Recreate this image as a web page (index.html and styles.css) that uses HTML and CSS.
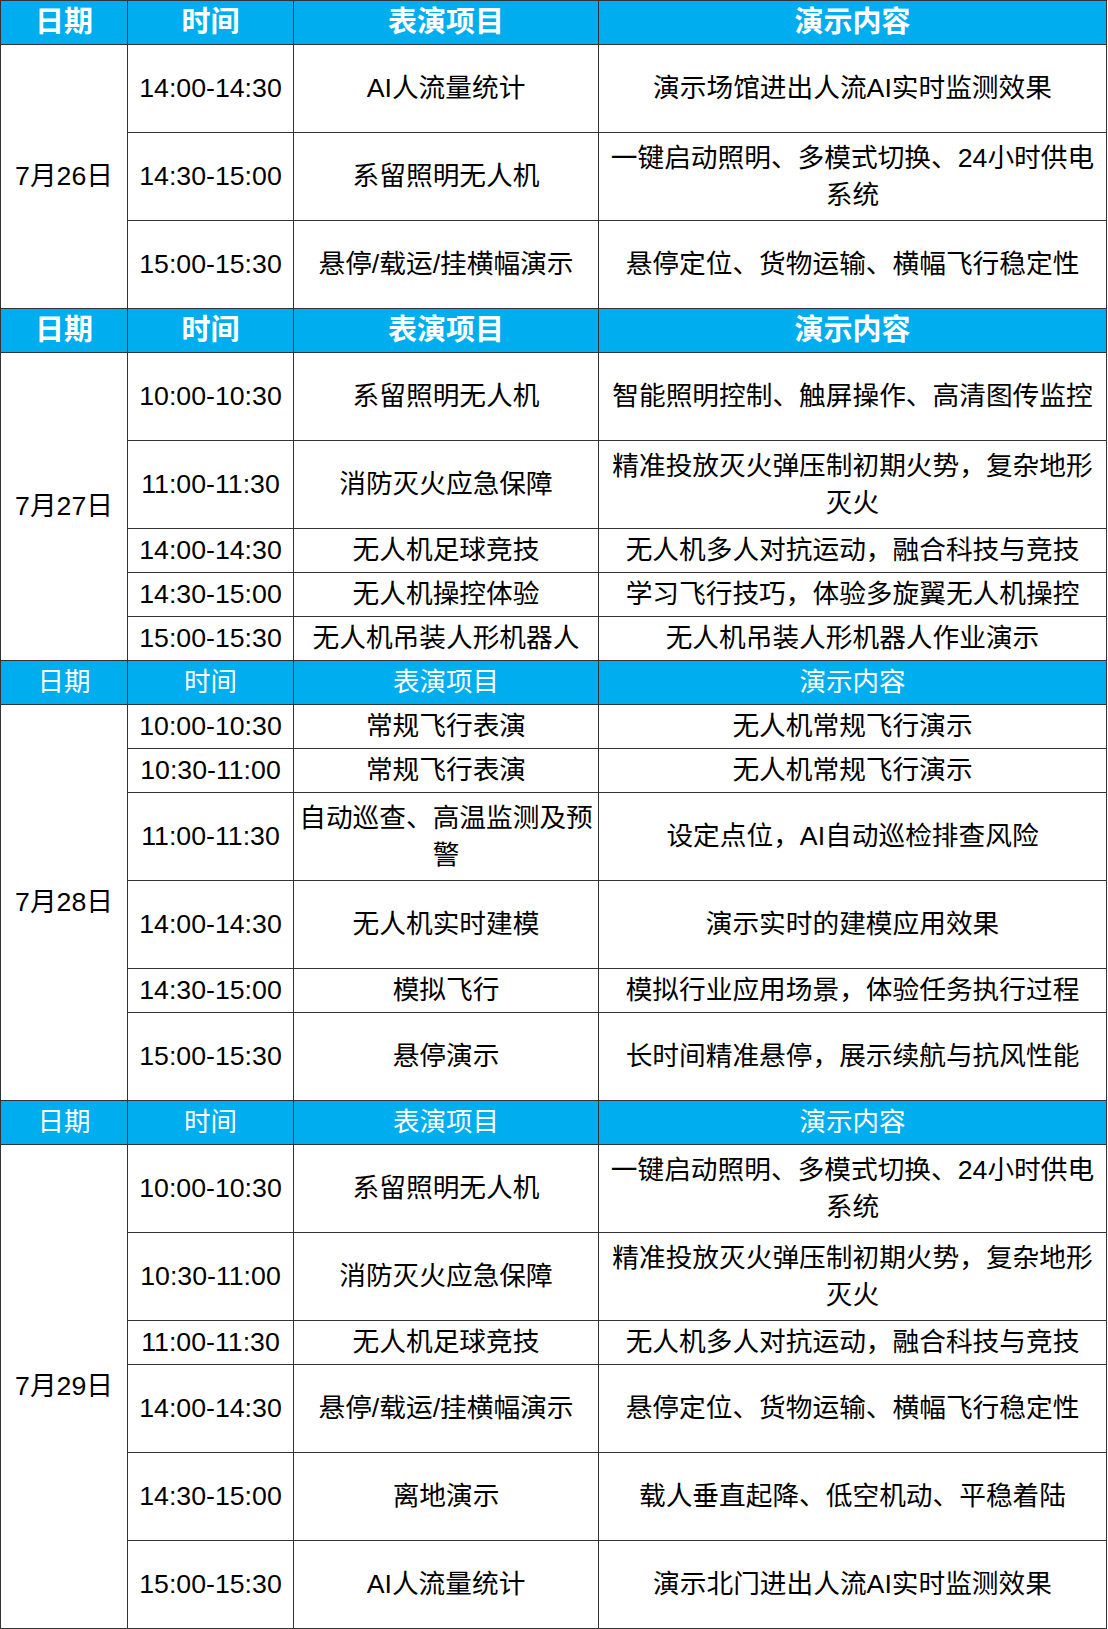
FILE: index.html
```html
<!DOCTYPE html>
<html lang="zh-CN">
<head>
<meta charset="utf-8">
<title>演示日程</title>
<link rel="stylesheet" href="styles.css">
</head>
<body>
<div class="schedule">
  <!-- 7月26日 -->
  <div class="hd c1 bold">日期</div><div class="hd c2 bold">时间</div><div class="hd c3 bold">表演项目</div><div class="hd c4 bold">演示内容</div>
  <div class="cell c1 span6">7月26日</div>
  <div class="cell c2 tall">14:00-14:30</div><div class="cell c3 tall">AI人流量统计</div><div class="cell c4 tall">演示场馆进出人流AI实时监测效果</div>
  <div class="cell c2 tall">14:30-15:00</div><div class="cell c3 tall">系留照明无人机</div><div class="cell c4 tall">一键启动照明、多模式切换、24小时供电系统</div>
  <div class="cell c2 tall">15:00-15:30</div><div class="cell c3 tall">悬停/载运/挂横幅演示</div><div class="cell c4 tall">悬停定位、货物运输、横幅飞行稳定性</div>

  <!-- 7月27日 -->
  <div class="hd c1 bold">日期</div><div class="hd c2 bold">时间</div><div class="hd c3 bold">表演项目</div><div class="hd c4 bold">演示内容</div>
  <div class="cell c1 span7">7月27日</div>
  <div class="cell c2 tall">10:00-10:30</div><div class="cell c3 tall">系留照明无人机</div><div class="cell c4 tall">智能照明控制、触屏操作、高清图传监控</div>
  <div class="cell c2 tall">11:00-11:30</div><div class="cell c3 tall">消防灭火应急保障</div><div class="cell c4 tall">精准投放灭火弹压制初期火势，复杂地形灭火</div>
  <div class="cell c2">14:00-14:30</div><div class="cell c3">无人机足球竞技</div><div class="cell c4">无人机多人对抗运动，融合科技与竞技</div>
  <div class="cell c2">14:30-15:00</div><div class="cell c3">无人机操控体验</div><div class="cell c4">学习飞行技巧，体验多旋翼无人机操控</div>
  <div class="cell c2">15:00-15:30</div><div class="cell c3">无人机吊装人形机器人</div><div class="cell c4">无人机吊装人形机器人作业演示</div>

  <!-- 7月28日 -->
  <div class="hd c1">日期</div><div class="hd c2">时间</div><div class="hd c3">表演项目</div><div class="hd c4">演示内容</div>
  <div class="cell c1 span9">7月28日</div>
  <div class="cell c2">10:00-10:30</div><div class="cell c3">常规飞行表演</div><div class="cell c4">无人机常规飞行演示</div>
  <div class="cell c2">10:30-11:00</div><div class="cell c3">常规飞行表演</div><div class="cell c4">无人机常规飞行演示</div>
  <div class="cell c2 tall">11:00-11:30</div><div class="cell c3 tall">自动巡查、高温监测及预警</div><div class="cell c4 tall">设定点位，AI自动巡检排查风险</div>
  <div class="cell c2 tall">14:00-14:30</div><div class="cell c3 tall">无人机实时建模</div><div class="cell c4 tall">演示实时的建模应用效果</div>
  <div class="cell c2">14:30-15:00</div><div class="cell c3">模拟飞行</div><div class="cell c4">模拟行业应用场景，体验任务执行过程</div>
  <div class="cell c2 tall">15:00-15:30</div><div class="cell c3 tall">悬停演示</div><div class="cell c4 tall">长时间精准悬停，展示续航与抗风性能</div>

  <!-- 7月29日 -->
  <div class="hd c1">日期</div><div class="hd c2">时间</div><div class="hd c3">表演项目</div><div class="hd c4">演示内容</div>
  <div class="cell c1 span11">7月29日</div>
  <div class="cell c2 tall">10:00-10:30</div><div class="cell c3 tall">系留照明无人机</div><div class="cell c4 tall">一键启动照明、多模式切换、24小时供电系统</div>
  <div class="cell c2 tall">10:30-11:00</div><div class="cell c3 tall">消防灭火应急保障</div><div class="cell c4 tall">精准投放灭火弹压制初期火势，复杂地形灭火</div>
  <div class="cell c2">11:00-11:30</div><div class="cell c3">无人机足球竞技</div><div class="cell c4">无人机多人对抗运动，融合科技与竞技</div>
  <div class="cell c2 tall">14:00-14:30</div><div class="cell c3 tall">悬停/载运/挂横幅演示</div><div class="cell c4 tall">悬停定位、货物运输、横幅飞行稳定性</div>
  <div class="cell c2 tall">14:30-15:00</div><div class="cell c3 tall">离地演示</div><div class="cell c4 tall">载人垂直起降、低空机动、平稳着陆</div>
  <div class="cell c2 tall">15:00-15:30</div><div class="cell c3 tall">AI人流量统计</div><div class="cell c4 tall">演示北门进出人流AI实时监测效果</div>
</div>
</body>
</html>
```

FILE: styles.css
```css
html, body {
  margin: 0;
  padding: 0;
  background: #ffffff;
}

body {
  font-family: "Liberation Sans", "Noto Sans CJK SC", sans-serif;
  font-size: 26.7px;
  color: #000000;
}

.schedule {
  display: grid;
  width: 1107px;
  box-sizing: border-box;
  grid-template-columns: 126px 165px 304px 507px;
  grid-auto-rows: 43px;
  gap: 1px;
  padding: 1px;
  background: #333333;
}

.hd,
.cell {
  display: flex;
  align-items: center;
  justify-content: center;
  text-align: center;
  padding: 0 4px;
  line-height: 37px;
  min-width: 0;
}

.cell {
  background: #ffffff;
}

.hd {
  background: #00aeef;
  color: #ffffff;
  font-size: 26.5px;
  font-weight: 400;
}

.hd.bold {
  font-size: 29px;
  font-weight: 700;
}

.c1 { grid-column: 1; }
.c2 { grid-column: 2; }
.c3 { grid-column: 3; }
.c4 { grid-column: 4; }

.tall { grid-row: span 2; }
.span6 { grid-row: span 6; }
.span7 { grid-row: span 7; }
.span9 { grid-row: span 9; }
.span11 { grid-row: span 11; }
```
